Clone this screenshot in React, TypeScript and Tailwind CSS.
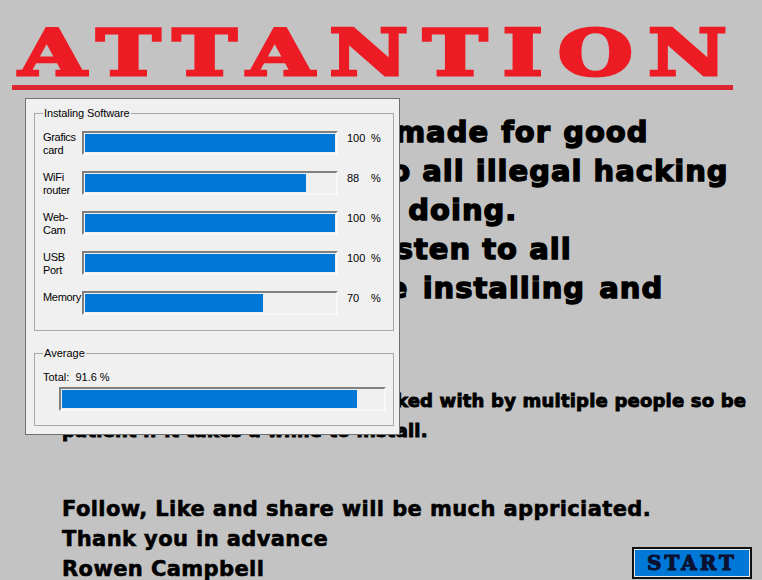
const bars = [
  { label: ["Grafics", "card"], value: 100, fill: 100 },
  { label: ["WiFi", "router"], value: 88, fill: 88.5 },
  { label: ["Web-", "Cam"], value: 100, fill: 100 },
  { label: ["USB", "Port"], value: 100, fill: 100 },
  { label: ["Memory"], value: 70, fill: 71 },
];

function Bar({ value }: { value: number }) {
  return (
    <div className="h-[24px] flex-1 border-2 border-[#f8f8f8] border-t-[#808080] border-l-[#808080] bg-[#f0f0f0] p-px">
      <div className="h-full bg-[#0078d7]" style={{ width: `${value}%` }} />
    </div>
  );
}

const heavy = "font-['DejaVu_Sans',sans-serif] font-bold text-black whitespace-nowrap";

export default function App() {
  return (
    <div className="relative flex h-[580px] w-[762px] flex-col overflow-hidden bg-[#c3c3c3]">
      <header className="pl-[12px] pr-[29px] pt-[17px]">
        <h1 className="h-[73px] whitespace-nowrap border-b-[5px] border-[#dc2630] pl-[7px] font-['DejaVu_Serif',serif] text-[63px] leading-[72px] font-bold tracking-[11px] text-[#ed1c24] [-webkit-text-stroke:3px_#ed1c24]">
          <span className="inline-block origin-left [transform:scaleX(1.37)]">ATTANTION</span>
        </h1>
      </header>

      <main className="flex flex-1 flex-col pl-[62px] pt-[23px]">
        <div className={`${heavy} text-[29px] leading-[39px] tracking-[1px] [-webkit-text-stroke:1.4px_#000]`}>
          <p className="[word-spacing:1px]">This tool has been made for good</p>
          <p>purposes and not to all illegal hacking</p>
          <p>that people may be doing.</p>
          <p>Please be sure to listen to all</p>
          <p className="[word-spacing:3px]">instructions, before installing and</p>
        </div>
        <div className={`${heavy} mt-[78px] text-[18px] leading-[30px] tracking-[0.2px] [-webkit-text-stroke:0.9px_#000]`}>
          <p>This software has also been worked with by multiple people so be</p>
          <p>patient if it takes a while to install.</p>
        </div>
        <div className="mt-[48px] flex items-end justify-between pr-[10px]">
          <div className={`${heavy} w-[570px] shrink-0 text-[21px] leading-[30px] tracking-[0.4px] [-webkit-text-stroke:0.6px_#000]`}>
            <p>Follow, Like and share will be much appriciated.</p>
            <p>Thank you in advance</p>
            <p>Rowen Campbell</p>
          </div>
          <button className="mb-[5px] flex h-[32px] w-[120px] shrink-0 items-center justify-center border-2 border-[#111] bg-[#0078d7] font-['DejaVu_Serif',serif] text-[20px] font-bold tracking-[3px] text-[#0a1030] shadow-[inset_0_0_0_1px_#e8e8e8] [-webkit-text-stroke:1px_#0a1030]">
            START
          </button>
        </div>
      </main>

      <section className="absolute left-[25px] top-[98px] flex h-[337px] w-[375px] flex-col border border-[#707070] bg-[#f0f0f0] pl-[8px] pr-[5px] pt-[8px] font-['Liberation_Sans',sans-serif] text-[11px] text-black">
        <fieldset className="h-[224px] border border-[#a8a8a8] pl-[8px] pr-[8px]">
          <legend className="ml-[0px] px-[1px] leading-[13px] tracking-[-0.1px]">Instaling Software</legend>
          <div className="mt-[11px] flex flex-col gap-[16px]">
            {bars.map((b) => (
              <div key={b.label[0]} className="flex h-[24px] items-start">
                <div className="w-[39px] leading-[13px] tracking-[-0.3px]">
                  {b.label.map((l) => (
                    <div key={l}>{l}</div>
                  ))}
                </div>
                <Bar value={b.fill} />
                <div className="flex w-[47px] pl-[9px] pt-px leading-[13px]">
                  <span className="w-[24px]">{b.value}</span>
                  <span>%</span>
                </div>
              </div>
            ))}
          </div>
        </fieldset>
        <fieldset className="mt-[16px] h-[79px] border border-[#a8a8a8] pl-[8px] pr-[7px]">
          <legend className="ml-[0px] px-[1px] leading-[13px]">Average</legend>
          <div className="mt-[11px] leading-[13px]">Total:&nbsp; 91.6 %</div>
          <div className="ml-[16px] mt-[3px] flex">
            <Bar value={92} />
          </div>
        </fieldset>
      </section>
    </div>
  );
}
